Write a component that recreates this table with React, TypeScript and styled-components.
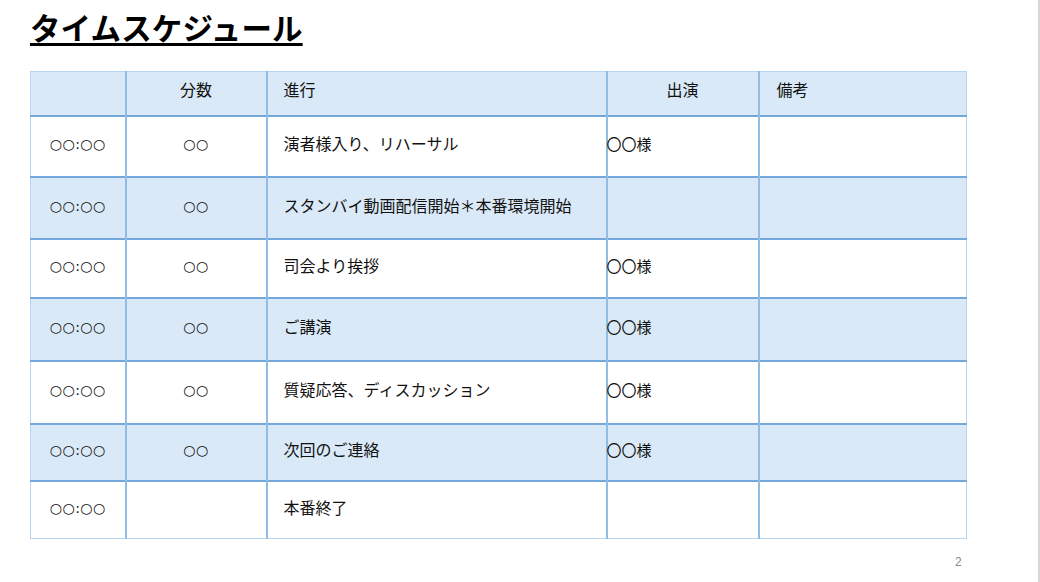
import React from "react"
import styled, { createGlobalStyle } from "styled-components"

const GlobalStyle = createGlobalStyle`
  html, body {
    margin: 0;
    padding: 0;
    background: #fff;
    overflow: hidden;
  }
  body {
    font-family: "Noto Sans CJK JP", "Noto Sans", sans-serif;
    color: #111;
  }
`

const Page = styled.div`
  position: relative;
  width: 1040px;
  height: 582px;
  box-sizing: border-box;
  border-right: 2px solid #d6d6d6;
  padding: 9px 0 0 30px;
  overflow: hidden;
`

const Title = styled.h1`
  margin: 0;
  font-size: 30.5px;
  line-height: 36px;
  font-weight: 700;
  letter-spacing: 0.1px;
  text-decoration: underline;
  text-decoration-thickness: 3px;
  text-underline-offset: 3px;
  color: #000;
`

const Table = styled.table`
  margin-top: 26px;
  border-collapse: collapse;
  table-layout: fixed;
  width: 936px;
  border: 1px solid #b7d5f0;
`

const Row = styled.tr<{ $shaded?: boolean; $h: number }>`
  height: ${(p) => p.$h}px;
  background: ${(p) => (p.$shaded ? "#dae9f7" : "#fff")};
  & + & {
    border-top: 2px solid #74a7da;
  }
`

const Cell = styled.td<{ $align?: "left" | "center"; $pad?: number; $lift?: number }>`
  padding: 0 0 ${(p) => p.$lift ?? 6}px ${(p) => p.$pad ?? 0}px;
  text-align: ${(p) => p.$align ?? "left"};
  vertical-align: middle;
  font-size: 16px;
  line-height: 20px;
  white-space: nowrap;
  border-left: 2px solid #8fbde6;
  &:first-child {
    border-left: 1px solid #b7d5f0;
  }
`

const Time = styled.span`
  font-family: "DejaVu Sans", sans-serif;
  font-size: 14px;
  letter-spacing: 0.5px;
`

const Mark = styled.span`
  font-family: "Noto Sans CJK JP", sans-serif;
  font-size: 15px;
  margin-left: -1px;
`

const PageNum = styled.div`
  position: absolute;
  left: 955px;
  top: 555px;
  font-family: "Liberation Sans", sans-serif;
  font-size: 12px;
  color: #8a8a8a;
`

type Item = {
  time: string
  mins: string
  step: string
  cast: string
}

const rows: Item[] = [
  { time: "○○:○○", mins: "○○", step: "演者様入り、リハーサル", cast: "〇〇様" },
  { time: "○○:○○", mins: "○○", step: "スタンバイ動画配信開始＊本番環境開始", cast: "" },
  { time: "○○:○○", mins: "○○", step: "司会より挨拶", cast: "〇〇様" },
  { time: "○○:○○", mins: "○○", step: "ご講演", cast: "〇〇様" },
  { time: "○○:○○", mins: "○○", step: "質疑応答、ディスカッション", cast: "〇〇様" },
  { time: "○○:○○", mins: "○○", step: "次回のご連絡", cast: "〇〇様" },
  { time: "○○:○○", mins: "", step: "本番終了", cast: "" },
]

const heights = [61, 62, 59, 63, 63, 57, 58]

export default function App() {
  return (
    <>
      <GlobalStyle />
      <Page>
        <Title>タイムスケジュール</Title>
        <Table>
          <colgroup>
            <col style={{ width: 95 }} />
            <col style={{ width: 141 }} />
            <col style={{ width: 340 }} />
            <col style={{ width: 152 }} />
            <col style={{ width: 208 }} />
          </colgroup>
          <tbody>
            <Row $shaded $h={44}>
              <Cell $lift={8} />
              <Cell $lift={8} $align="center">分数</Cell>
              <Cell $lift={8} $pad={16}>進行</Cell>
              <Cell $lift={8} $align="center">出演</Cell>
              <Cell $lift={8} $pad={17}>備考</Cell>
            </Row>
            {rows.map((r, i) => (
              <Row key={i} $shaded={i % 2 === 1} $h={heights[i]}>
                <Cell $align="center">
                  <Time>{r.time}</Time>
                </Cell>
                <Cell $align="center">
                  <Time>{r.mins}</Time>
                </Cell>
                <Cell $pad={16}>{r.step}</Cell>
                <Cell>
                  <Mark>{r.cast}</Mark>
                </Cell>
                <Cell />
              </Row>
            ))}
          </tbody>
        </Table>
        <PageNum>2</PageNum>
      </Page>
    </>
  )
}
